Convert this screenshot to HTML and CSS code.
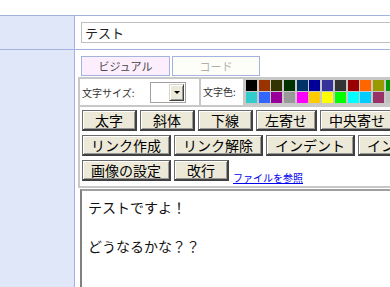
FILE: index.html
```html
<!DOCTYPE html>
<html lang="ja">
<head>
    <meta charset="UTF-8">
    <meta name="viewport" content="width=device-width, initial-scale=1.0">
    <title>記事の編集</title>
    <link rel="stylesheet" href="styles.css">
</head>
<body>
    <div class="page">
        <div class="form-row">
            <div class="label-cell"></div>
            <div class="field-cell">
                <input type="text" class="title-input" value="テスト">
            </div>
        </div>

        <div class="form-row">
            <div class="label-cell"></div>
            <div class="field-cell">
                <div class="tabs">
                    <span class="tab active">ビジュアル</span>
                    <span class="tab">コード</span>
                </div>

                <div class="toolbar">
                    <div class="toolbar-top">
                        <div class="cell size-cell">
                            <span class="cell-label">文字サイズ:</span>
                            <span class="select"><span class="select-arrow"></span></span>
                        </div>
                        <div class="cell color-cell">文字色:</div>
                        <div class="swatches">
                            <span class="swatch" style="background:#000000"></span>
                            <span class="swatch" style="background:#993300"></span>
                            <span class="swatch" style="background:#333300"></span>
                            <span class="swatch" style="background:#003300"></span>
                            <span class="swatch" style="background:#003366"></span>
                            <span class="swatch" style="background:#000099"></span>
                            <span class="swatch" style="background:#333399"></span>
                            <span class="swatch" style="background:#333333"></span>
                            <span class="swatch" style="background:#990000"></span>
                            <span class="swatch" style="background:#ff6600"></span>
                            <span class="swatch" style="background:#999900"></span>
                            <span class="swatch" style="background:#009900"></span>
                            <span class="swatch" style="background:#339999"></span>
                            <span class="swatch" style="background:#3333ff"></span>
                            <span class="swatch" style="background:#33cccc"></span>
                            <span class="swatch" style="background:#3366ff"></span>
                            <span class="swatch" style="background:#990099"></span>
                            <span class="swatch" style="background:#999999"></span>
                            <span class="swatch" style="background:#ff00ff"></span>
                            <span class="swatch" style="background:#ffcc00"></span>
                            <span class="swatch" style="background:#ffff00"></span>
                            <span class="swatch" style="background:#00ff00"></span>
                            <span class="swatch" style="background:#00ffff"></span>
                            <span class="swatch" style="background:#00ccff"></span>
                            <span class="swatch" style="background:#993366"></span>
                            <span class="swatch" style="background:#c0c0c0"></span>
                            <span class="swatch" style="background:#ff99cc"></span>
                            <span class="swatch" style="background:#ffffff"></span>
                        </div>
                    </div>

                    <div class="cell buttons">
                        <div class="btn-row">
                            <button type="button">太字</button>
                            <button type="button">斜体</button>
                            <button type="button">下線</button>
                            <button type="button">左寄せ</button>
                            <button type="button">中央寄せ</button>
                            <button type="button">右寄せ</button>
                        </div>
                        <div class="btn-row">
                            <button type="button">リンク作成</button>
                            <button type="button">リンク解除</button>
                            <button type="button">インデント</button>
                            <button type="button">インデント解除</button>
                        </div>
                        <div class="btn-row">
                            <button type="button">画像の設定</button>
                            <button type="button">改行</button>
                            <a href="#" class="file-link">ファイルを参照</a>
                        </div>
                    </div>
                </div>

                <div class="editor">
                    <p>テストですよ！</p>
                    <p>どうなるかな？？</p>
                </div>
            </div>
        </div>
    </div>
</body>
</html>
```

FILE: styles.css
```css
html, body {
    margin: 0;
    overflow: hidden;
}
body {
    background: #ffffff;
    color: #000000;
    font-family: "Noto Sans CJK JP", "Noto Sans", sans-serif;
}
.page {
    margin-top: 15px;
    width: 720px;
}
.form-row {
    display: grid;
    grid-template-columns: 75px 1fr;
    border-top: 1px solid #a4b2df;
}
.label-cell {
    background: #e0e7f8;
    border-right: 1px solid #a4b2df;
}
.field-cell {
    padding: 6px 0 6px 6px;
}
.title-input {
    display: block;
    box-sizing: border-box;
    width: 620px;
    height: 21px;
    margin: 0;
    padding: 0 3px;
    border: 1px solid #c0c0c0;
    font-family: inherit;
    font-size: 13px;
    color: #222222;
    outline: none;
}
.tabs {
    display: flex;
    gap: 2px;
}
.tab {
    box-sizing: border-box;
    width: 88px;
    height: 20px;
    border: 1px solid #a4b2df;
    background: #fefef8;
    color: #b0b0b0;
    font-size: 11px;
    line-height: 18px;
    text-align: center;
}
.tab.active {
    width: 89px;
    background: #fdeefd;
    color: #444444;
}
.toolbar {
    display: flex;
    flex-direction: column;
    gap: 2px;
    width: 620px;
    margin: 1px 0 0 -3px;
    padding: 2px;
    background: #c8c8c8;
}
.cell {
    background: #ffffff;
}
.toolbar-top {
    display: flex;
    gap: 2px;
    height: 26px;
}
.size-cell {
    display: flex;
    align-items: center;
    width: 119px;
    padding-left: 2px;
    box-sizing: border-box;
}
.cell-label {
    width: 68px;
}
.size-cell, .color-cell {
    font-size: 10px;
    color: #333333;
}
.color-cell {
    box-sizing: border-box;
    width: 42px;
    padding-left: 2px;
    line-height: 26px;
}
.select {
    position: relative;
    box-sizing: border-box;
    width: 36px;
    height: 21px;
    border: 1px solid #a0a0a0;
    background: #ffffff;
}
.select-arrow {
    position: absolute;
    top: 1px;
    right: 1px;
    box-sizing: border-box;
    width: 15px;
    height: 17px;
    background: #ece9d8;
    border: 1px solid #d8d4c8;
    border-right-color: #404040;
    border-bottom-color: #404040;
    box-shadow: inset 1px 1px #ffffff, inset -1px -1px #9a9a9a;
}
.select-arrow::after {
    content: "";
    position: absolute;
    left: 4px;
    top: 6px;
    border-left: 3px solid transparent;
    border-right: 3px solid transparent;
    border-top: 3px solid #000000;
}
.swatches {
    display: grid;
    grid-template-columns: repeat(14, 11px);
    grid-auto-rows: 11px;
    column-gap: 1.7px;
    row-gap: 1px;
    padding: 1px 0 0 1px;
}
.buttons {
    display: flex;
    flex-direction: column;
    gap: 4px;
    padding: 3px 0 5px 2px;
}
.btn-row {
    display: flex;
    gap: 3px;
}
.btn-row button {
    box-sizing: border-box;
    min-width: 55px;
    height: 21px;
    margin: 0;
    padding: 0 8px;
    background: #ece9d8;
    border: 1px solid #6a6a6a;
    border-right: 2px solid #404040;
    border-bottom: 2px solid #404040;
    box-shadow: inset 1px 1px #ffffff, inset -1px -1px #9a9a9a;
    font-family: inherit;
    font-size: 14px;
    line-height: 18px;
    color: #000000;
    white-space: nowrap;
    flex-shrink: 0;
}
.file-link {
    align-self: flex-end;
    margin: 0 0 -3px 1px;
    font-size: 10px;
    line-height: 12px;
    color: #0000ee;
}
.editor {
    width: 620px;
    height: 200px;
    margin: 1px 0 0 -1px;
    padding: 4px 6px;
    border: 2px solid;
    border-color: #a0a0a0 #e0e0e0 #e0e0e0 #808080;
    font-size: 14px;
    line-height: 25px;
    color: #111111;
}
.editor p {
    margin: 0 0 14px;
}
```
